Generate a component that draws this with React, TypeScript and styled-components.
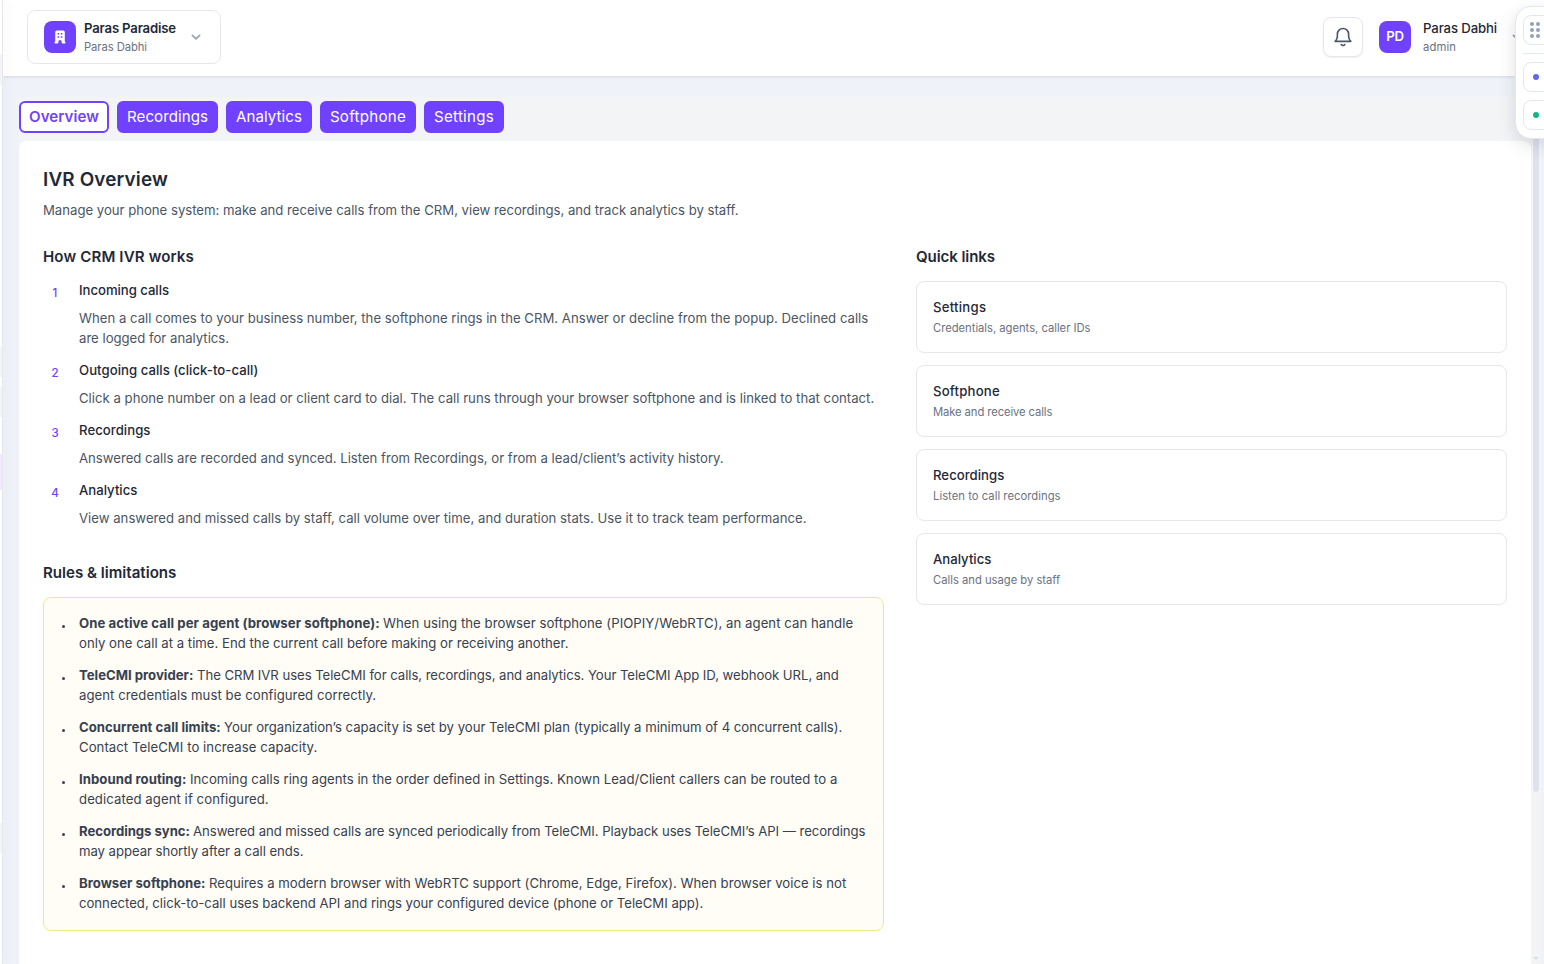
import React from 'react';
import styled, { createGlobalStyle } from 'styled-components';
import { HiOfficeBuilding } from 'react-icons/hi';

const PURPLE = '#7042ff';

const GlobalStyle = createGlobalStyle`
  * { box-sizing: border-box; }
  html, body { margin: 0; height: 100%; overflow: hidden; }
  body { font-family: Inter, "Liberation Sans", sans-serif; background: #eff3f9; }
  h1, h2, h3, p, ul, ol { margin: 0; padding: 0; font-weight: inherit; list-style: none; }
  button { font-family: inherit; padding: 0; }
`;

/* ---------- shell ---------- */

const Shell = styled.div`
  position: relative;
  display: flex;
  height: 100vh;
  overflow: hidden;
`;

const Sidebar = styled.aside`
  flex: 0 0 3px;
  display: flex;
  flex-direction: column;
  background: #fff;
  border-right: 1px solid #e5e7eb;
  box-shadow: 2px 0 12px rgba(0, 0, 0, 0.07);
  z-index: 2;
`;

const SidebarMark = styled.span<{ $gap: number; $height: number; $active?: boolean }>`
  flex: none;
  height: ${(p) => p.$height}px;
  margin-top: ${(p) => p.$gap}px;
  background: ${(p) => (p.$active ? '#f1e8ff' : '#f3f4f6')};
`;

const Page = styled.div`
  flex: 1;
  min-width: 0;
  display: flex;
  flex-direction: column;
`;

/* ---------- header ---------- */

const Header = styled.header`
  flex: 0 0 76px;
  display: flex;
  align-items: center;
  justify-content: space-between;
  padding: 0 24px 2px;
  background: #fff;
  box-shadow: 0 1px 3px rgba(0, 0, 0, 0.1);
`;

const Workspace = styled.button`
  display: flex;
  align-items: center;
  width: 194px;
  height: 54px;
  padding: 0 16px;
  border: 1px solid #e5e7eb;
  border-radius: 8px;
  background: #fff;
  text-align: left;
`;

const Badge = styled.span`
  flex: none;
  display: flex;
  align-items: center;
  justify-content: center;
  width: 32px;
  height: 32px;
  border-radius: 8px;
  background: ${PURPLE};
  color: #fff;
  font-size: 13.2px;
  line-height: 18px;
  font-weight: 600;
  letter-spacing: -0.2px;
`;

const Initials = styled.span`
  padding-bottom: 2px;
`;

const Identity = styled.span<{ $inset: number }>`
  display: flex;
  flex-direction: column;
  margin-left: ${(p) => p.$inset}px;
  white-space: nowrap;
`;

const Name = styled.span<{ $weight: number; $track: number }>`
  margin: -1px 0 1px;
  font-size: 13.17px;
  line-height: 20px;
  font-weight: ${(p) => p.$weight};
  letter-spacing: ${(p) => p.$track}px;
  color: #1f2937;
`;

const Role = styled.span<{ $track: number }>`
  font-size: 11.25px;
  line-height: 16px;
  letter-spacing: ${(p) => p.$track}px;
  color: #6b7280;
`;

const Chevron = styled.svg`
  flex: none;
  width: 12px;
  height: 12px;
  margin-left: 14px;
  fill: none;
  stroke: #9ca3af;
  stroke-width: 1.8;
  stroke-linecap: round;
  stroke-linejoin: round;
`;

const Account = styled.div`
  display: flex;
  align-items: center;
  margin-right: -3px;
`;

const BellButton = styled.button`
  display: flex;
  align-items: center;
  justify-content: center;
  width: 40px;
  height: 40px;
  margin-right: 16px;
  border: 1px solid #e5e7eb;
  border-radius: 8px;
  background: #fff;
  box-shadow: 0 1px 2px rgba(0, 0, 0, 0.06);
  svg { width: 24px; height: 24px; fill: none; stroke: #4b5563; stroke-width: 1.6; stroke-linecap: round; stroke-linejoin: round; }
`;

/* ---------- content ---------- */

const Body = styled.div`
  flex: 1;
  min-height: 0;
  display: flex;
  margin: 21px 3px 0 16px;
  background: #f3f4f6;
`;

const Scroller = styled.main`
  flex: 1;
  min-width: 0;
  display: flex;
  flex-direction: column;
  padding-top: 4px;
`;

const ScrollTrack = styled.div`
  flex: 0 0 10px;
  display: flex;
  flex-direction: column;
  align-items: center;
  justify-content: space-between;
  padding-bottom: 4px;
`;

const ScrollThumb = styled.div`
  width: 6px;
  height: 695px;
  border-radius: 3px;
  background: #dfe1ed;
`;

const ScrollArrow = styled.div`
  border: 3px solid transparent;
  border-top-color: #d9dcea;
  border-bottom: 0;
`;

const Tabs = styled.nav`
  display: flex;
  gap: 8px;
  margin-bottom: 8px;
`;

const Tab = styled.button<{ $width: number; $track: number; $active?: boolean }>`
  width: ${(p) => p.$width}px;
  height: 32px;
  border: 2px solid ${PURPLE};
  border-radius: 6px;
  background: ${(p) => (p.$active ? '#fff' : PURPLE)};
  color: ${(p) => (p.$active ? PURPLE : '#fff')};
  font-size: 15.1px;
  font-weight: ${(p) => (p.$active ? 600 : 400)};
  line-height: 24px;
  letter-spacing: ${(p) => p.$track}px;
  white-space: nowrap;
`;

const Card = styled.section`
  flex: 1;
  padding: 25px 24px 24px;
  border-radius: 8px 8px 0 0;
  background: #fff;
`;

const PageTitle = styled.h1`
  font-size: 18.9px;
  line-height: 28px;
  font-weight: 600;
  letter-spacing: 0.16px;
  color: #1f2937;
`;

const Line = styled.span<{ $track?: number }>`
  display: block;
  white-space: nowrap;
  letter-spacing: ${(p) => p.$track ?? 0}px;
`;

const Intro = styled.p`
  margin: 6px 0 25px;
  font-size: 13.17px;
  line-height: 20px;
  color: #4b5563;
`;

const Columns = styled.div`
  display: grid;
  grid-template-columns: minmax(0, 841fr) minmax(0, 591fr);
  gap: 32px;
  align-items: start;
`;

const Stack = styled.div<{ $gap: number }>`
  display: flex;
  flex-direction: column;
  gap: ${(p) => p.$gap}px;
`;

const SectionTitle = styled.h2<{ $track: number }>`
  margin-bottom: 12px;
  font-size: 15.1px;
  line-height: 24px;
  font-weight: 600;
  letter-spacing: ${(p) => p.$track}px;
  color: #1f2937;
`;

const Step = styled.li`
  display: flex;
  gap: 12px;
`;

const StepNumber = styled.span`
  flex: 0 0 24px;
  height: 24px;
  text-align: center;
  font-size: 11.5px;
  line-height: 24px;
  font-weight: 500;
  color: ${PURPLE};
`;

const StepTitle = styled.h3<{ $track: number }>`
  margin: -1px 0 8px;
  font-size: 13.17px;
  line-height: 20px;
  font-weight: 500;
  letter-spacing: ${(p) => p.$track}px;
  color: #1f2937;
`;

const StepText = styled.p`
  padding-bottom: 1px;
  font-size: 13.17px;
  line-height: 20px;
  color: #4b5563;
`;

const RulesBox = styled.ul`
  display: flex;
  flex-direction: column;
  gap: 12px;
  padding: 15px 16px 17px;
  border: 1px solid #fde68a;
  border-radius: 8px;
  background: #fffdf5;
`;

const Rule = styled.li`
  display: flex;
  gap: 14px;
  font-size: 13.17px;
  line-height: 20px;
  color: #374151;
  &::before {
    content: '';
    flex: none;
    width: 3px;
    height: 3px;
    margin: 12px 0 0 2px;
    border-radius: 50%;
    background: #374151;
  }
`;

const Lead = styled.strong<{ $width: number; $track: number }>`
  display: inline-block;
  width: ${(p) => p.$width}px;
  font-weight: 700;
  letter-spacing: ${(p) => p.$track}px;
`;

const QuickLink = styled.a`
  display: flex;
  flex-direction: column;
  gap: 3px;
  height: 72px;
  padding: 15px 16px 16px;
  border: 1px solid #e5e7eb;
  border-radius: 8px;
`;

const QuickName = styled.span<{ $track: number }>`
  font-size: 13.17px;
  line-height: 20px;
  font-weight: 450;
  letter-spacing: ${(p) => p.$track}px;
  color: #1f2937;
`;

/* ---------- floating dock ---------- */

const Dock = styled.aside`
  position: absolute;
  top: 6px;
  left: 1514.5px;
  z-index: 5;
  display: flex;
  flex-direction: column;
  width: 50px;
  height: 133px;
  padding: 8px;
  border: 1px solid #e2e8f0;
  border-radius: 16px;
  background: #fff;
  box-shadow: 0 6px 18px rgba(15, 23, 42, 0.13);
`;

const DockButton = styled.span<{ $dot?: string }>`
  flex: none;
  display: flex;
  align-items: center;
  height: 30px;
  padding-left: 8px;
  margin: 0 0 8px -0.5px;
  border: 1px solid #e2e8f0;
  border-radius: 8px;
  background: #fff;
  &::before {
    content: '';
    display: ${(p) => (p.$dot ? 'block' : 'none')};
    width: 6px;
    height: 6px;
    margin-left: 0.5px;
    border-radius: 50%;
    background: ${(p) => p.$dot ?? 'none'};
  }
  svg { width: 12px; height: 18px; margin-left: -3px; fill: #94a3b8; }
`;

const DockRule = styled.span`
  flex: none;
  height: 1px;
  margin: 0 0 8px -0.5px;
  background: #e2e8f0;
`;

/* ---------- data ---------- */

type Text = [string, number];

const tabs: { label: string; width: number; track: number }[] = [
  { label: 'Overview', width: 90, track: 0.05 },
  { label: 'Recordings', width: 101, track: 0.05 },
  { label: 'Analytics', width: 86, track: 0.05 },
  { label: 'Softphone', width: 96, track: 0.28 },
  { label: 'Settings', width: 80, track: 0.26 },
];

const steps: { title: Text; lines: Text[] }[] = [
  {
    title: ['Incoming calls', -0.04],
    lines: [
      ['When a call comes to your business number, the softphone rings in the CRM. Answer or decline from the popup. Declined calls', 0.008],
      ['are logged for analytics.', -0.01],
    ],
  },
  {
    title: ['Outgoing calls (click-to-call)', 0.04],
    lines: [['Click a phone number on a lead or client card to dial. The call runs through your browser softphone and is linked to that contact.', 0.008]],
  },
  {
    title: ['Recordings', 0.04],
    lines: [['Answered calls are recorded and synced. Listen from Recordings, or from a lead/client’s activity history.', -0.006]],
  },
  {
    title: ['Analytics', 0],
    lines: [['View answered and missed calls by staff, call volume over time, and duration stats. Use it to track team performance.', 0.009]],
  },
];

const rules: { lead: Text; width: number; first: Text; second: Text }[] = [
  {
    lead: ['One active call per agent (browser softphone):', 0.06],
    width: 304,
    first: ['When using the browser softphone (PIOPIY/WebRTC), an agent can handle', 0.05],
    second: ['only one call at a time. End the current call before making or receiving another.', 0.01],
  },
  {
    lead: ['TeleCMI provider:', 0],
    width: 118,
    first: ['The CRM IVR uses TeleCMI for calls, recordings, and analytics. Your TeleCMI App ID, webhook URL, and', -0.056],
    second: ['agent credentials must be configured correctly.', 0.055],
  },
  {
    lead: ['Concurrent call limits:', 0.02],
    width: 145,
    first: ['Your organization’s capacity is set by your TeleCMI plan (typically a minimum of 4 concurrent calls).', -0.014],
    second: ['Contact TeleCMI to increase capacity.', 0.055],
  },
  {
    lead: ['Inbound routing:', 0.05],
    width: 111,
    first: ['Incoming calls ring agents in the order defined in Settings. Known Lead/Client callers can be routed to a', 0.029],
    second: ['dedicated agent if configured.', 0.07],
  },
  {
    lead: ['Recordings sync:', -0.05],
    width: 114,
    first: ['Answered and missed calls are synced periodically from TeleCMI. Playback uses TeleCMI’s API — recordings', -0.055],
    second: ['may appear shortly after a call ends.', -0.05],
  },
  {
    lead: ['Browser softphone:', 0],
    width: 130,
    first: ['Requires a modern browser with WebRTC support (Chrome, Edge, Firefox). When browser voice is not', 0.016],
    second: ['connected, click-to-call uses backend API and rings your configured device (phone or TeleCMI app).', -0.018],
  },
];

const links: { name: Text; note: Text }[] = [
  { name: ['Settings', 0.24], note: ['Credentials, agents, caller IDs', -0.03] },
  { name: ['Softphone', 0.2], note: ['Make and receive calls', -0.1] },
  { name: ['Recordings', 0.03], note: ['Listen to call recordings', 0.03] },
  { name: ['Analytics', 0], note: ['Calls and usage by staff', -0.02] },
];

const DownIcon = () => (
  <Chevron viewBox="0 0 12 12">
    <path d="M2.4 4.4 6 7.9l3.6-3.5" />
  </Chevron>
);

export default function App() {
  return (
    <>
      <GlobalStyle />
      <Shell>
        <Sidebar>
          <SidebarMark $gap={55} $height={30} />
          <SidebarMark $gap={262} $height={30} />
          <SidebarMark $gap={10} $height={30} />
          <SidebarMark $gap={37} $height={36} $active />
          <SidebarMark $gap={333} $height={30} />
        </Sidebar>
        <Page>
          <Header>
            <Workspace>
              <Badge>
                <HiOfficeBuilding size={16} />
              </Badge>
              <Identity $inset={8}>
                <Name $weight={600} $track={-0.17}>Paras Paradise</Name>
                <Role $track={-0.08}>Paras Dabhi</Role>
              </Identity>
              <DownIcon />
            </Workspace>
            <Account>
              <BellButton aria-label="Notifications">
                <svg viewBox="0 0 24 24">
                  <path d="M4.2 16.4h15.6c-1.5-1.6-2.2-2.7-2.2-5.2V9.1a5.6 5.6 0 0 0-11.2 0v2.1c0 2.5-.7 3.6-2.2 5.2Z" />
                  <path d="M10.2 19.5c.9 1.3 2.7 1.3 3.6 0" />
                </svg>
              </BellButton>
              <Badge>
                <Initials>PD</Initials>
              </Badge>
              <Identity $inset={12}>
                <Name $weight={500} $track={-0.12}>Paras Dabhi</Name>
                <Role $track={0.1}>admin</Role>
              </Identity>
              <DownIcon />
            </Account>
          </Header>
          <Body>
            <Scroller>
              <Tabs>
                {tabs.map((t, i) => (
                  <Tab key={t.label} $width={t.width} $track={t.track} $active={i === 0}>{t.label}</Tab>
                ))}
              </Tabs>
              <Card>
                <PageTitle>IVR Overview</PageTitle>
                <Intro>
                  <Line $track={-0.013}>Manage your phone system: make and receive calls from the CRM, view recordings, and track analytics by staff.</Line>
                </Intro>
                <Columns>
                  <Stack $gap={32}>
                    <section>
                      <SectionTitle $track={0.12}>How CRM IVR works</SectionTitle>
                      <Stack as="ol" $gap={12}>
                        {steps.map((s, i) => (
                          <Step key={s.title[0]}>
                            <StepNumber>{i + 1}</StepNumber>
                            <div>
                              <StepTitle $track={s.title[1]}>{s.title[0]}</StepTitle>
                              <StepText>
                                {s.lines.map(([text, track]) => (
                                  <Line key={text} $track={track}>{text}</Line>
                                ))}
                              </StepText>
                            </div>
                          </Step>
                        ))}
                      </Stack>
                    </section>
                    <section>
                      <SectionTitle $track={0}>Rules &amp; limitations</SectionTitle>
                      <RulesBox>
                        {rules.map((r) => (
                          <Rule key={r.lead[0]}>
                            <div>
                              <Line $track={r.first[1]}>
                                <Lead $width={r.width} $track={r.lead[1]}>{r.lead[0]}</Lead>
                                {r.first[0]}
                              </Line>
                              <Line $track={r.second[1]}>{r.second[0]}</Line>
                            </div>
                          </Rule>
                        ))}
                      </RulesBox>
                    </section>
                  </Stack>
                  <section>
                    <SectionTitle $track={-0.1}>Quick links</SectionTitle>
                    <Stack $gap={12}>
                      {links.map((l) => (
                        <QuickLink key={l.name[0]}>
                          <QuickName $track={l.name[1]}>{l.name[0]}</QuickName>
                          <Role $track={l.note[1]}>{l.note[0]}</Role>
                        </QuickLink>
                      ))}
                    </Stack>
                  </section>
                </Columns>
              </Card>
            </Scroller>
            <ScrollTrack>
              <ScrollThumb />
              <ScrollArrow />
            </ScrollTrack>
          </Body>
        </Page>
        <Dock>
          <DockButton>
            <svg viewBox="0 0 12 18">
              {[3, 9, 15].map((y) => (
                <g key={y}>
                  <circle cx="3" cy={y} r="2" />
                  <circle cx="9" cy={y} r="2" />
                </g>
              ))}
            </svg>
          </DockButton>
          <DockRule />
          <DockButton $dot="#6366f1" />
          <DockButton $dot="#10b981" />
        </Dock>
      </Shell>
    </>
  );
}
